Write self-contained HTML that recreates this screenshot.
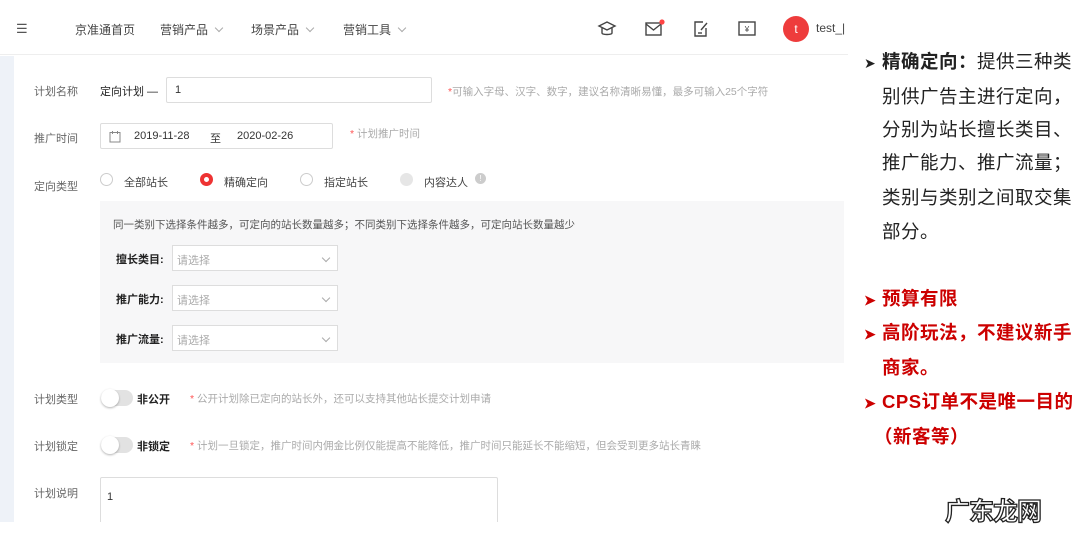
<!DOCTYPE html>
<html><head><meta charset="utf-8"><style>
*{margin:0;padding:0;box-sizing:border-box}
body{width:1080px;height:536px;background:#fff;position:relative;overflow:hidden;font-family:"Liberation Sans","Noto Sans CJK SC",sans-serif;color:#333}
.a{position:absolute;white-space:nowrap}
.nav{font-size:12px;color:#444}
.lbl{font-size:11px;color:#666}
.box{position:absolute;border:1px solid #ddd;background:#fff;border-radius:2px}
.hint{font-size:10.5px;color:#aaa}
.hint b{color:#f55;font-weight:normal}
.chev{display:inline-block;width:6px;height:6px;border-right:1px solid #aaa;border-bottom:1px solid #aaa;transform:rotate(45deg);margin-left:8px;position:relative;top:-3px}
.r{position:absolute;width:13px;height:13px;border-radius:50%;border:1px solid #ccc;background:#fff}
.sel{position:absolute;width:166px;height:26px;border:1px solid #ddd;background:#fff;font-size:11px;color:#aaa;padding:6px 4px}
.tg{position:absolute;width:32px;height:16px;border-radius:8px;background:#e2e2e2}
.tg:after{content:"";position:absolute;left:0;top:-1px;width:18px;height:18px;border-radius:50%;background:#fff;box-shadow:0 1px 2px rgba(0,0,0,.3)}
.rt{font-size:18.5px;line-height:34px;letter-spacing:0.5px;font-family:"Liberation Sans","Noto Sans CJK SC",sans-serif}
.ar{display:inline-block;width:18px;font-size:14px;letter-spacing:0}
</style></head><body>
<div style="position:absolute;left:0;top:0;width:848px;height:55px;border-bottom:1px solid #eee"></div>
<div class="a nav" style="left:16px;top:21px;font-size:13px;color:#555">☰</div>
<div class="a nav" style="left:75px;top:21px">京准通首页</div>
<div class="a nav" style="left:160px;top:21px">营销产品<span class="chev"></span></div>
<div class="a nav" style="left:251px;top:21px">场景产品<span class="chev"></span></div>
<div class="a nav" style="left:343px;top:21px">营销工具<span class="chev"></span></div>
<svg class="a" style="left:597px;top:19px" width="20" height="20" viewBox="0 0 20 20" fill="none" stroke="#444" stroke-width="1.4"><path d="M2 7l8-4 8 4-8 4z"/><path d="M5 9v5c0 2 10 2 10 0V9"/></svg>
<svg class="a" style="left:644px;top:19px" width="22" height="20" viewBox="0 0 22 20" fill="none" stroke="#444" stroke-width="1.4"><rect x="2" y="4" width="15" height="12"/><path d="M2 5l7.5 6L17 5"/><circle cx="18" cy="3" r="2.6" fill="#f44" stroke="none"/></svg>
<svg class="a" style="left:691px;top:19px" width="20" height="20" viewBox="0 0 20 20" fill="none" stroke="#444" stroke-width="1.4"><path d="M15 9v8H4V3h8"/><path d="M10 11l6-7"/><path d="M7 14h4"/></svg>
<svg class="a" style="left:737px;top:19px" width="20" height="20" viewBox="0 0 20 20" fill="none" stroke="#444" stroke-width="1.4"><rect x="2" y="3" width="16" height="13"/><text x="10" y="13" font-size="8" text-anchor="middle" fill="#444" stroke="none">¥</text></svg>
<div class="a" style="left:783px;top:16px;width:26px;height:26px;border-radius:50%;background:#ee3c3c;color:#fff;font-size:12px;text-align:center;line-height:26px">t</div>
<div class="a nav" style="left:816px;top:21px">test_|</div>
<div style="position:absolute;left:0;top:56px;width:14px;height:466px;background:#eef2f8"></div>
<div class="a lbl" style="left:34px;top:83px">计划名称</div>
<div class="a" style="left:100px;top:83px;font-size:11px;color:#222">定向计划 —</div>
<div class="box" style="left:166px;top:77px;width:266px;height:26px;font-size:11px;padding:6px 8px">1</div>
<div class="a hint" style="left:448px;top:84px"><b>*</b>可输入字母、汉字、数字，建议名称清晰易懂，最多可输入25个字符</div>
<div class="a lbl" style="left:34px;top:130px">推广时间</div>
<div class="box" style="left:100px;top:123px;width:233px;height:26px;font-size:11px;color:#333;padding:6px 0 0 8px">
<svg style="position:absolute;left:8px;top:6px" width="12" height="13" viewBox="0 0 12 13" fill="none" stroke="#888"><rect x="1" y="2.5" width="10" height="9.5"/><path d="M3.5 1v3M8.5 1v3"/></svg>
<span style="position:absolute;left:33px;top:6px">2019-11-28</span><span style="position:absolute;left:109px;top:6px">至</span><span style="position:absolute;left:136px;top:6px">2020-02-26</span></div>
<div class="a hint" style="left:350px;top:126px"><b>*</b> 计划推广时间</div>
<div class="a lbl" style="left:34px;top:178px">定向类型</div>
<div class="r" style="left:100px;top:173px"></div><div class="a lbl" style="left:124px;top:174px;color:#444">全部站长</div>
<div class="r" style="left:200px;top:173px;border:4px solid #e33"></div><div class="a lbl" style="left:224px;top:174px;color:#444">精确定向</div>
<div class="r" style="left:300px;top:173px"></div><div class="a lbl" style="left:324px;top:174px;color:#444">指定站长</div>
<div class="r" style="left:400px;top:173px;background:#e6e6e6;border-color:#e6e6e6"></div><div class="a lbl" style="left:424px;top:174px;color:#444">内容达人</div>
<div class="a" style="left:475px;top:173px;width:11px;height:11px;border-radius:50%;background:#ccc;color:#fff;font-size:8px;text-align:center;line-height:11px">!</div>
<div style="position:absolute;left:100px;top:201px;width:744px;height:162px;background:#f7f7f8"></div>
<div class="a" style="left:113px;top:217px;font-size:10.5px;color:#555">同一类别下选择条件越多，可定向的站长数量越多；不同类别下选择条件越多，可定向站长数量越少</div>
<div class="a" style="left:116px;top:251px;font-size:11px;color:#222;font-weight:bold">擅长类目:</div>
<div class="sel" style="left:172px;top:245px">请选择<span class="chev" style="position:absolute;right:8px;top:9px"></span></div>
<div class="a" style="left:116px;top:291px;font-size:11px;color:#222;font-weight:bold">推广能力:</div>
<div class="sel" style="left:172px;top:285px">请选择<span class="chev" style="position:absolute;right:8px;top:9px"></span></div>
<div class="a" style="left:116px;top:331px;font-size:11px;color:#222;font-weight:bold">推广流量:</div>
<div class="sel" style="left:172px;top:325px">请选择<span class="chev" style="position:absolute;right:8px;top:9px"></span></div>
<div class="a lbl" style="left:34px;top:391px">计划类型</div>
<div class="tg" style="left:101px;top:390px"></div>
<div class="a" style="left:137px;top:391px;font-size:11px;color:#222;font-weight:bold">非公开</div>
<div class="a hint" style="left:190px;top:391px"><b>*</b> 公开计划除已定向的站长外，还可以支持其他站长提交计划申请</div>
<div class="a lbl" style="left:34px;top:438px">计划锁定</div>
<div class="tg" style="left:101px;top:437px"></div>
<div class="a" style="left:137px;top:438px;font-size:11px;color:#222;font-weight:bold">非锁定</div>
<div class="a hint" style="left:190px;top:438px"><b>*</b> 计划一旦锁定，推广时间内佣金比例仅能提高不能降低，推广时间只能延长不能缩短，但会受到更多站长青睐</div>
<div class="a lbl" style="left:34px;top:485px">计划说明</div>
<div class="box" style="left:100px;top:477px;width:398px;height:50px;font-size:11px;padding:13px 6px">1</div>
<div style="position:absolute;left:0;top:522px;width:860px;height:14px;background:#fff"></div>
<div class="a rt" style="left:864px;top:45px;color:#222"><span class="ar">➤</span><b>精确定向：</b>提供三种类</div>
<div class="a rt" style="left:882px;top:80px;color:#222">别供广告主进行定向，</div>
<div class="a rt" style="left:882px;top:113px;color:#222">分别为站长擅长类目、</div>
<div class="a rt" style="left:882px;top:146px;color:#222">推广能力、推广流量；</div>
<div class="a rt" style="left:882px;top:181px;color:#222">类别与类别之间取交集</div>
<div class="a rt" style="left:882px;top:215px;color:#222">部分。</div>
<div class="a rt" style="left:864px;top:282px;color:#c00;font-weight:bold"><span class="ar">➤</span>预算有限</div>
<div class="a rt" style="left:864px;top:316px;color:#c00;font-weight:bold"><span class="ar">➤</span>高阶玩法，不建议新手</div>
<div class="a rt" style="left:882px;top:351px;color:#c00;font-weight:bold">商家。</div>
<div class="a rt" style="left:864px;top:385px;color:#c00;font-weight:bold"><span class="ar">➤</span>CPS订单不是唯一目的</div>
<div class="a rt" style="left:874px;top:420px;color:#c00;font-weight:bold">（新客等）</div>
<div class="a" style="left:945px;top:492px;font-size:25px;font-weight:bold;color:#fff;-webkit-text-stroke:1.3px #222;letter-spacing:-1px">广东龙网</div>
</body></html>
